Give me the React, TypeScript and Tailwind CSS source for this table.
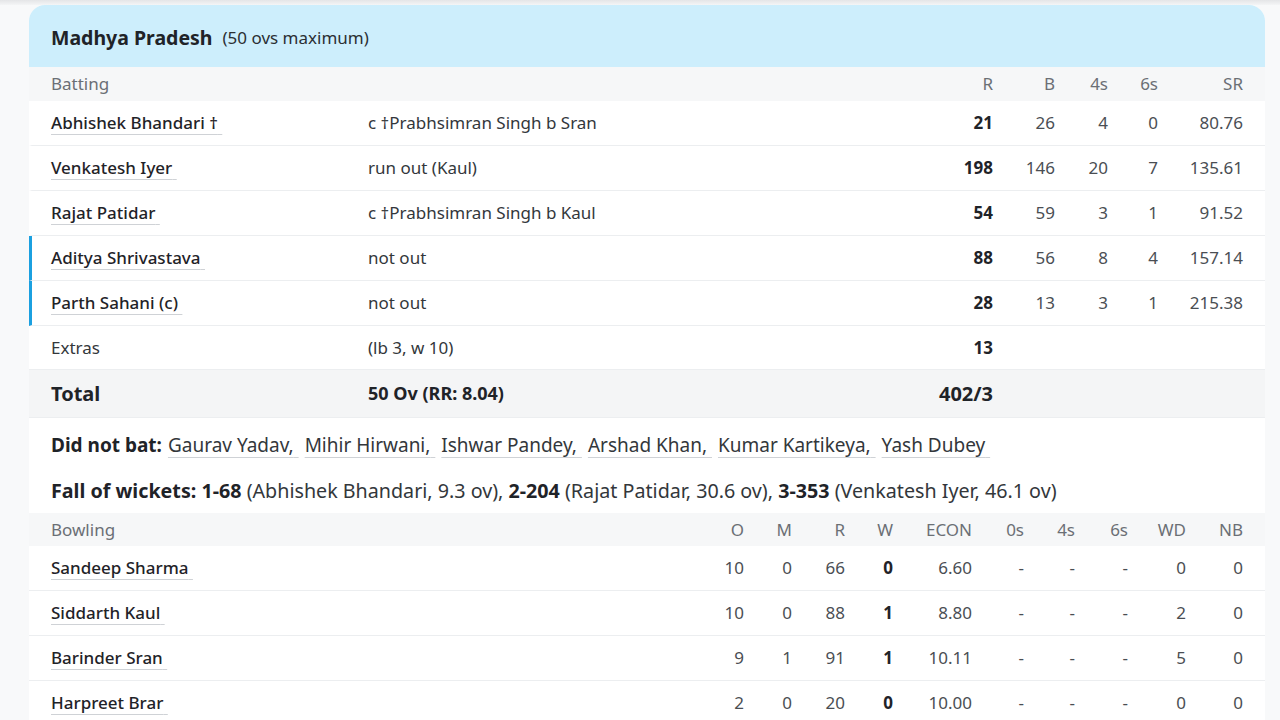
import React from 'react'

const batting = [
  { name: 'Abhishek Bhandari †', out: 'c †Prabhsimran Singh b Sran', r: '21', b: '26', f: '4', s: '0', sr: '80.76', live: false },
  { name: 'Venkatesh Iyer', out: 'run out (Kaul)', r: '198', b: '146', f: '20', s: '7', sr: '135.61', live: false },
  { name: 'Rajat Patidar', out: 'c †Prabhsimran Singh b Kaul', r: '54', b: '59', f: '3', s: '1', sr: '91.52', live: false },
  { name: 'Aditya Shrivastava', out: 'not out', r: '88', b: '56', f: '8', s: '4', sr: '157.14', live: true },
  { name: 'Parth Sahani (c)', out: 'not out', r: '28', b: '13', f: '3', s: '1', sr: '215.38', live: true },
]

const bowling = [
  { name: 'Sandeep Sharma', o: '10', m: '0', r: '66', w: '0', econ: '6.60', wd: '0', nb: '0' },
  { name: 'Siddarth Kaul', o: '10', m: '0', r: '88', w: '1', econ: '8.80', wd: '2', nb: '0' },
  { name: 'Barinder Sran', o: '9', m: '1', r: '91', w: '1', econ: '10.11', wd: '5', nb: '0' },
  { name: 'Harpreet Brar', o: '2', m: '0', r: '20', w: '0', econ: '10.00', wd: '0', nb: '0' },
]

const dnb = ['Gaurav Yadav,', 'Mihir Hirwani,', 'Ishwar Pandey,', 'Arshad Khan,', 'Kumar Kartikeya,', 'Yash Dubey']

function Name({ children }: { children: React.ReactNode }) {
  return (
    <span className="underline decoration-[#cfd2d6] decoration-1 underline-offset-[5px]">{children}&nbsp;</span>
  )
}

export default function App() {
  return (
    <div
      className="w-[1280px] h-[720px] overflow-hidden bg-[#f8f9fa] text-[17px] text-[#1f2328]"
      style={{ fontFamily: '"Noto Sans", "Open Sans", sans-serif' }}
    >
      <div className="h-[5px] bg-gradient-to-b from-[#e4e5e7] to-[#f4f5f6]" />
      <div className="ml-[29px] w-[1236px] bg-white rounded-t-[16px] overflow-hidden">
        {/* Header */}
        <div className="h-[62px] bg-[#cdeefc] flex items-center pt-[3px] pl-[22px] gap-2.5">
          <span className="text-[19.5px] font-bold text-[#1f2328]">Madhya Pradesh</span>
          <span className="text-[17px] text-[#2b2f33]">(50 ovs maximum)</span>
        </div>

        {/* Batting head */}
        <div className="h-[34px] bg-[#f6f7f8] flex items-center text-[#6b6f75] text-[17px]">
          <div className="w-[339px] pl-[22px]">Batting</div>
          <div className="flex-1" />
          <div className="w-[60px] text-right">R</div>
          <div className="w-[62px] text-right">B</div>
          <div className="w-[53px] text-right">4s</div>
          <div className="w-[50px] text-right">6s</div>
          <div className="w-[85px] text-right">SR</div>
          <div className="w-[22px]" />
        </div>

        {batting.map((p) => (
          <div
            key={p.name}
            className={`h-[45px] flex items-center border-b border-[#eceef0] ${p.live ? 'border-l-[3px] border-l-[#1ba0e0]' : 'border-l-[3px] border-l-white'}`}
          >
            <div className="w-[336px] pl-[19px] font-medium"><Name>{p.name}</Name></div>
            <div className="flex-1 text-[#33373b]">{p.out}</div>
            <div className="w-[60px] text-right font-bold">{p.r}</div>
            <div className="w-[62px] text-right text-[#4a4e53]">{p.b}</div>
            <div className="w-[53px] text-right text-[#4a4e53]">{p.f}</div>
            <div className="w-[50px] text-right text-[#4a4e53]">{p.s}</div>
            <div className="w-[85px] text-right text-[#4a4e53]">{p.sr}</div>
            <div className="w-[22px]" />
          </div>
        ))}

        <div className="h-[44px] flex items-center border-b border-[#eceef0]">
          <div className="w-[339px] pl-[22px] text-[#33373b]">Extras</div>
          <div className="flex-1 text-[#33373b]">(lb 3, w 10)</div>
          <div className="w-[60px] text-right font-bold">13</div>
          <div className="w-[272px]" />
        </div>

        <div className="h-[48px] bg-[#f4f5f6] flex items-center border-b border-[#eceef0]">
          <div className="w-[339px] pl-[22px] font-bold text-[20px]">Total</div>
          <div className="flex-1 font-bold text-[18px]">50 Ov (RR: 8.04)</div>
          <div className="w-[100px] text-right font-bold text-[20px]">402/3</div>
          <div className="w-[272px]" />
        </div>

        <div className="h-[53px] flex items-center pt-[2px] pl-[22px] text-[19px]">
          <span className="font-bold mr-1.5">Did not bat:</span>
          <span className="flex gap-1.5 text-[#33373b]">
            {dnb.map((n) => (
              <Name key={n}>{n}</Name>
            ))}
          </span>
        </div>

        <div className="h-[42px] flex items-start pt-[5px] pl-[22px] text-[19.7px] text-[#33373b]">
          <span>
            <b className="text-[#1f2328]">Fall of wickets: 1-68</b> (Abhishek Bhandari, 9.3 ov), <b className="text-[#1f2328]">2-204</b> (Rajat Patidar, 30.6 ov), <b className="text-[#1f2328]">3-353</b> (Venkatesh Iyer, 46.1 ov)
          </span>
        </div>

        {/* Bowling head */}
        <div className="h-[33px] bg-[#f6f7f8] flex items-center text-[#6b6f75] text-[17px]">
          <div className="flex-1 pl-[22px]">Bowling</div>
          <div className="w-[50px] text-right">O</div>
          <div className="w-[48px] text-right">M</div>
          <div className="w-[53px] text-right">R</div>
          <div className="w-[48px] text-right">W</div>
          <div className="w-[79px] text-right">ECON</div>
          <div className="w-[52px] text-right">0s</div>
          <div className="w-[51px] text-right">4s</div>
          <div className="w-[53px] text-right">6s</div>
          <div className="w-[58px] text-right">WD</div>
          <div className="w-[57px] text-right">NB</div>
          <div className="w-[22px]" />
        </div>

        {bowling.map((b) => (
          <div key={b.name} className="h-[45px] flex items-center border-b border-[#eceef0] text-[#4a4e53]">
            <div className="flex-1 pl-[22px] font-medium text-[#1f2328]"><Name>{b.name}</Name></div>
            <div className="w-[50px] text-right">{b.o}</div>
            <div className="w-[48px] text-right">{b.m}</div>
            <div className="w-[53px] text-right">{b.r}</div>
            <div className="w-[48px] text-right font-bold text-[#1f2328]">{b.w}</div>
            <div className="w-[79px] text-right">{b.econ}</div>
            <div className="w-[52px] text-right">-</div>
            <div className="w-[51px] text-right">-</div>
            <div className="w-[53px] text-right">-</div>
            <div className="w-[58px] text-right">{b.wd}</div>
            <div className="w-[57px] text-right">{b.nb}</div>
            <div className="w-[22px]" />
          </div>
        ))}
      </div>
    </div>
  )
}
